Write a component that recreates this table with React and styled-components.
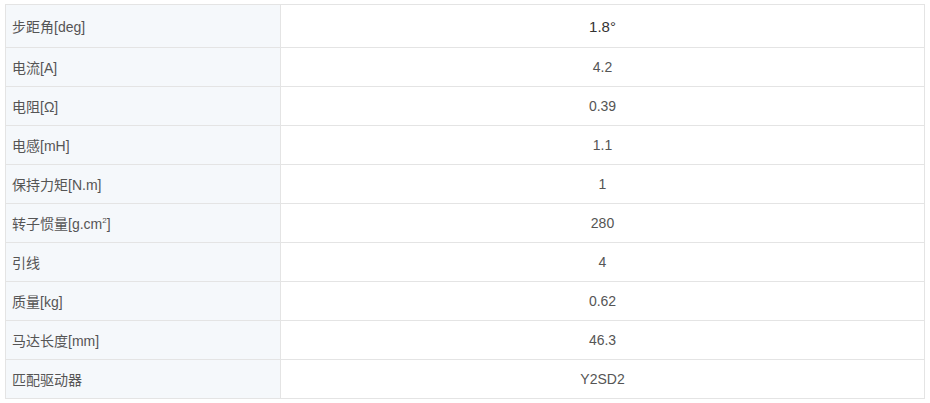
import React from "react";
import styled, { createGlobalStyle } from "styled-components";

const GlobalStyle = createGlobalStyle`
  body {
    margin: 0;
    background: #fff;
    font-family: "Liberation Sans", Arial, "Noto Sans CJK SC", sans-serif;
  }
`;

const Table = styled.table`
  margin: 4px 0 0 5px;
  width: 920px;
  border-collapse: collapse;
  table-layout: fixed;
  font-size: 14px;
  color: #555;
`;

const Row = styled.tr`
  height: ${(p) => (p.first ? "43px" : "39px")};
`;

const Label = styled.td`
  width: 275px;
  box-sizing: border-box;
  padding: 0 0 0 6px;
  background: #f5f8fb;
  border: 1px solid #e4e4e4;
  text-align: left;
  vertical-align: middle;
`;

const Value = styled.td`
  border: 1px solid #e4e4e4;
  text-align: center;
  vertical-align: middle;
  padding: 0;
  font-size: ${(p) => (p.big ? "15px" : "14px")};
  color: ${(p) => (p.big ? "#333" : "#555")};
`;

const Sup = styled.sup`
  font-size: 8px;
`;

const specs = [
  ["步距角[deg]", "1.8°"],
  ["电流[A]", "4.2"],
  ["电阻[Ω]", "0.39"],
  ["电感[mH]", "1.1"],
  ["保持力矩[N.m]", "1"],
  [
    <>
      转子惯量[g.cm<Sup>2</Sup>]
    </>,
    "280",
  ],
  ["引线", "4"],
  ["质量[kg]", "0.62"],
  ["马达长度[mm]", "46.3"],
  ["匹配驱动器", "Y2SD2"],
];

export default function App() {
  return (
    <>
      <GlobalStyle />
      <Table>
        <tbody>
          {specs.map(([k, v], i) => (
            <Row key={i} first={i === 0}>
              <Label>{k}</Label>
              <Value big={i === 0}>{v}</Value>
            </Row>
          ))}
        </tbody>
      </Table>
    </>
  );
}
